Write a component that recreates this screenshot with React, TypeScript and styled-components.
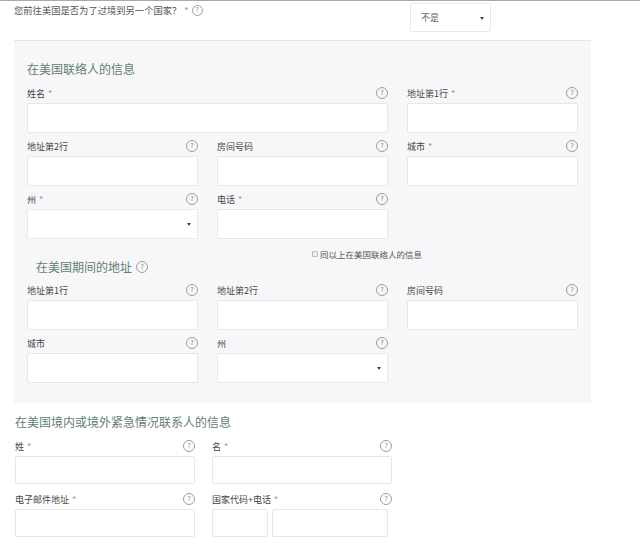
import React from "react";
import styled, { createGlobalStyle } from "styled-components";

const Global = createGlobalStyle`
  html, body { margin: 0; padding: 0; background: #fff; }
  body { font-family: "Noto Sans CJK SC", "Noto Sans", sans-serif; color: #555; }
  * { box-sizing: border-box; }
`;

const Page = styled.div`
  width: 640px;
  height: 556px;
  border-top: 1px solid #a9a9a9;
  padding: 0 0 0 14px;
  overflow: hidden;
`;

const TopRow = styled.div`
  display: grid;
  grid-template-columns: 396px 81px;
  align-items: start;
  height: 31px;
`;

const Question = styled.div`
  display: flex;
  align-items: center;
  gap: 3px;
  margin-top: 2px;
  font-size: 9.3px;
  line-height: 14px;
  color: #555;
`;

const Star = styled.span`
  color: #999;
  margin-left: 3px;
`;

const Help = styled.span<{ $size?: number }>`
  display: inline-flex;
  align-items: center;
  justify-content: center;
  width: ${(p) => p.$size ?? 12}px;
  height: ${(p) => p.$size ?? 12}px;
  border: 1px solid #9d9d9d;
  border-radius: 50%;
  font-family: "DejaVu Sans", sans-serif;
  font-size: ${(p) => ((p.$size ?? 12) * 0.58).toFixed(1)}px;
  line-height: 1;
  color: #8a8a8a;
  flex: none;
`;

const SelectBox = styled.div<{ $h?: number }>`
  position: relative;
  display: flex;
  align-items: center;
  height: ${(p) => p.$h ?? 30}px;
  padding: 0 10px;
  background: #fff;
  border: 1px solid #e9e9eb;
  border-radius: 2px;
  font-size: 9px;
  color: #666;
  &::after {
    content: "";
    position: absolute;
    right: 6px;
    top: 50%;
    margin-top: -1px;
    border-left: 2px solid transparent;
    border-right: 2px solid transparent;
    border-top: 3px solid #444;
  }
`;

const Panel = styled.section`
  width: 577px;
  margin-top: 8px;
  background: #f7f7f9;
  border-top: 1px solid #e4e4e6;
  padding: 19px 13px 20px;
`;

const Heading = styled.h3<{ $indent?: number }>`
  display: flex;
  align-items: center;
  gap: 4px;
  margin: 0;
  padding-left: ${(p) => p.$indent ?? 0}px;
  font-size: 12px;
  font-weight: 400;
  line-height: 18px;
  color: #62806f;
`;

const Grid = styled.div<{ $cols: string; $col: number; $row: number }>`
  display: grid;
  grid-template-columns: ${(p) => p.$cols};
  column-gap: ${(p) => p.$col}px;
  row-gap: ${(p) => p.$row}px;
  margin-top: 7px;
`;

const Field = styled.div<{ $span?: number }>`
  grid-column: span ${(p) => p.$span ?? 1};
  display: flex;
  flex-direction: column;
`;

const LabelRow = styled.div`
  display: flex;
  align-items: center;
  justify-content: space-between;
  height: 16px;
  margin-bottom: 2px;
`;

const Label = styled.span`
  font-size: 9px;
  color: #444;
`;

const Input = styled.div<{ $h?: number }>`
  height: ${(p) => p.$h ?? 30}px;
  background: #fff;
  border: 1px solid #e7e7e9;
  border-radius: 2px;
`;

const PhoneInputs = styled.div`
  display: grid;
  grid-template-columns: 56px 116px;
  gap: 4px;
`;

const CheckRow = styled.div`
  display: flex;
  align-items: center;
  gap: 2px;
  height: 12px;
  margin-top: 9px;
  padding-left: 285px;
  font-size: 8.5px;
  color: #555;
`;

const CheckBox = styled.span`
  width: 6px;
  height: 6px;
  border: 1px solid #bbb;
  border-radius: 1px;
  background: #eee;
`;

const SubHeading = styled(Heading)`
  line-height: 14px;
  margin-bottom: -7px;
`;

const Section = styled.section`
  width: 400px;
  margin-top: 10px;
  padding-left: 1px;
`;

type FieldDef = { label: string; req?: boolean; span?: number; select?: boolean; h?: number; phone?: boolean };

const FieldView: React.FC<FieldDef> = ({ label, req, span, select, h, phone }) => (
  <Field $span={span}>
    <LabelRow>
      <Label>
        {label}
        {req && <Star>*</Star>}
      </Label>
      <Help>?</Help>
    </LabelRow>
    {phone ? (
      <PhoneInputs>
        <Input $h={h} />
        <Input $h={h} />
      </PhoneInputs>
    ) : select ? (
      <SelectBox $h={h} />
    ) : (
      <Input $h={h} />
    )}
  </Field>
);

const contact: FieldDef[] = [
  { label: "姓名", req: true, span: 2 },
  { label: "地址第1行", req: true },
  { label: "地址第2行" },
  { label: "房间号码" },
  { label: "城市", req: true },
  { label: "州", req: true, select: true },
  { label: "电话", req: true },
];

const stay: FieldDef[] = [
  { label: "地址第1行" },
  { label: "地址第2行" },
  { label: "房间号码" },
  { label: "城市" },
  { label: "州", select: true },
];

const emergency: FieldDef[] = [
  { label: "姓", req: true, h: 28 },
  { label: "名", req: true, h: 28 },
  { label: "电子邮件地址", req: true, h: 28 },
  { label: "国家代码+电话", req: true, h: 28, phone: true },
];

export default function App() {
  return (
    <>
      <Global />
      <Page>
        <TopRow>
          <Question>
            <span>
              您前往美国是否为了过境到另一个国家？<Star>*</Star>
            </span>
            <Help $size={11}>?</Help>
          </Question>
          <SelectBox $h={29} style={{ marginTop: 2 }}>不是</SelectBox>
        </TopRow>

        <Panel>
          <Heading>在美国联络人的信息</Heading>
          <Grid $cols="171px 171px 171px" $col={19} $row={5}>
            {contact.map((f) => (
              <FieldView key={f.label} {...f} />
            ))}
          </Grid>
          <CheckRow>
            <CheckBox />
            <span>同以上在美国联络人的信息</span>
          </CheckRow>
          <SubHeading $indent={9}>
            在美国期间的地址 <Help $size={12}>?</Help>
          </SubHeading>
          <Grid $cols="171px 171px 171px" $col={19} $row={5} style={{ marginTop: 15 }}>
            {stay.map((f) => (
              <FieldView key={f.label} {...f} />
            ))}
          </Grid>
        </Panel>

        <Section>
          <Heading>在美国境内或境外紧急情况联系人的信息</Heading>
          <Grid $cols="180px 180px" $col={17} $row={7}>
            {emergency.map((f) => (
              <FieldView key={f.label} {...f} />
            ))}
          </Grid>
        </Section>
      </Page>
    </>
  );
}
